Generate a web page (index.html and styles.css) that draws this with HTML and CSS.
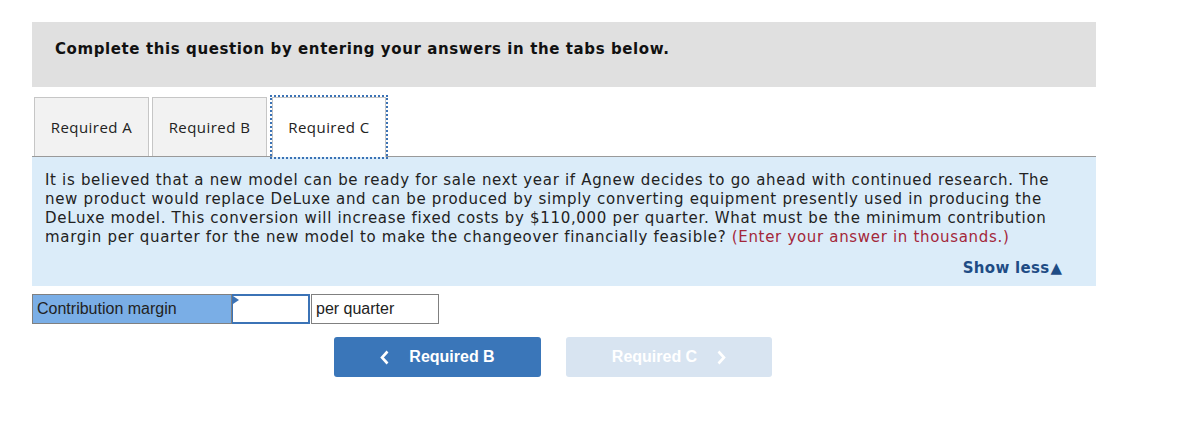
FILE: index.html
```html
<!DOCTYPE html>
<html>
<head>
<meta charset="utf-8">
<link rel="stylesheet" href="styles.css">
</head>
<body>
<div class="wrap">
  <div class="header">Complete this question by entering your answers in the tabs below.</div>
  <div class="tabs">
    <div class="tab">Required A</div>
    <div class="tab">Required B</div>
    <div class="tab active">Required C</div>
  </div>
  <div class="panel">
    <p class="question">It is believed that a new model can be ready for sale next year if Agnew decides to go ahead with continued research. The new product would replace DeLuxe and can be produced by simply converting equipment presently used in producing the DeLuxe model. This conversion will increase fixed costs by $110,000 per quarter. What must be the minimum contribution margin per quarter for the new model to make the changeover financially feasible? <span class="hint">(Enter your answer in thousands.)</span></p>
    <div class="showless">Show less<span class="tri">▲</span></div>
  </div>
  <div class="row">
    <div class="label">Contribution margin</div>
    <div class="input"><span class="flag"></span></div>
    <div class="unit">per quarter</div>
  </div>
  <div class="nav">
    <div class="btn prev"><svg class="chev" width="9" height="15" viewBox="0 0 9 15"><path d="M7.5 1.5 L2 7.5 L7.5 13.5" fill="none" stroke="#fff" stroke-width="2.6"/></svg>Required B</div>
    <div class="btn next disabled">Required C<svg class="chev" width="9" height="15" viewBox="0 0 9 15"><path d="M1.5 1.5 L7 7.5 L1.5 13.5" fill="none" stroke="#fff" stroke-width="2.6"/></svg></div>
  </div>
</div>
</body>
</html>
```

FILE: styles.css
```css
html, body { margin: 0; padding: 0; background: #fff; }
.wrap { padding: 22px 0 0 32px; width: 1064px; }
.header {
  background: #e0e0e0;
  height: 65px;
  box-sizing: border-box;
  padding: 17px 0 0 23px;
  font-family: "DejaVu Sans", Verdana, sans-serif;
  font-weight: bold;
  font-size: 15px;
  letter-spacing: 0.6px;
  line-height: 20px;
  color: #111;
}
.tabs {
  margin-top: 10px;
  display: flex;
  padding-left: 2px;
  gap: 3px;
  border-bottom: 1px solid #9a9a9a;
  height: 59px;
}
.tab {
  width: 115px;
  height: 59px;
  box-sizing: border-box;
  background: #f2f2f2;
  border: 1px solid #c6c6c6;
  border-bottom: none;
  display: flex;
  align-items: center;
  justify-content: center;
  font-family: "Open Sans", "Noto Sans", sans-serif;
  font-size: 15px;
  letter-spacing: 0.45px;
  color: #222;
  padding-bottom: 1px;
}
.tab.active {
  background: #fff;
  margin-left: 2px;
  outline: 2px dotted #3a72b5;
  outline-offset: 0;
  width: 114px;
  height: 60px;
  padding-bottom: 2px;
}
.panel {
  background: #dbecf9;
  height: 129px;
  box-sizing: border-box;
  padding: 14px 34px 0 13px;
}
.question {
  margin: 0;
  font-family: "DejaVu Sans", Verdana, sans-serif;
  font-size: 15px;
  letter-spacing: 0.68px;
  line-height: 19px;
  color: #222;
}
.hint { color: #a3273a; }
.showless {
  margin-top: 12px;
  text-align: right;
  font-family: "DejaVu Sans", Verdana, sans-serif;
  font-weight: bold;
  font-size: 15px;
  letter-spacing: 0.3px;
  line-height: 18px;
  color: #1f4c85;
}
.tri { font-size: 15px; margin-left: 1px; letter-spacing: 0; }
.row {
  margin-top: 8px;
  display: flex;
  height: 30px;
  font-family: "Liberation Sans", Arial, sans-serif;
  font-size: 16px;
  color: #222;
}
.label {
  width: 200px;
  box-sizing: border-box;
  background: #7aaee6;
  border: 1px solid #808080;
  padding-left: 4px;
  display: flex;
  align-items: center;
}
.input {
  width: 78px;
  box-sizing: border-box;
  background: #fff;
  border: 2px solid #3b73b6;
  border-left-width: 1px;
  position: relative;
  margin-right: 1px;
}
.flag {
  position: absolute;
  left: 0; top: 0;
  width: 0; height: 0;
  border-top: 4px solid transparent;
  border-bottom: 4px solid transparent;
  border-left: 6px solid #3b73b6;
}
.unit {
  width: 128px;
  box-sizing: border-box;
  border: 1px solid #808080;
  padding-left: 4px;
  display: flex;
  align-items: center;
}
.nav {
  margin: 13px 0 0 302px;
  display: flex;
  gap: 25px;
}
.btn {
  width: 207px;
  height: 40px;
  border-radius: 3px;
  background: #3a76b9;
  color: #fff;
  font-family: "Liberation Sans", Arial, sans-serif;
  font-weight: bold;
  font-size: 16px;
  display: flex;
  align-items: center;
  justify-content: center;
}
.btn.disabled { background: #d8e4f1; color: #fff; width: 206px; }
.chev { display: block; }
.prev .chev { margin-right: 20px; }
.next .chev { margin-left: 20px; }
```
